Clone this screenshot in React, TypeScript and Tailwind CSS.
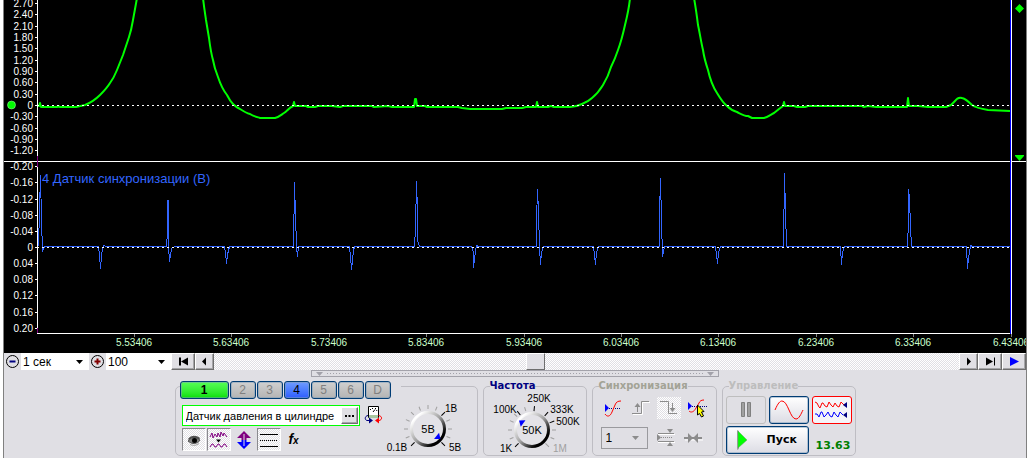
import { useState } from 'react';
import clsx from 'clsx';

const CHECKER = 'bg-[repeating-conic-gradient(#ffffff_0_25%,#e0dfe4_0_50%)] bg-[length:2px_2px]';
const RAISED = 'border border-t-white border-l-white border-r-[#6e6e6e] border-b-[#6e6e6e] bg-[#e0dfe4] shadow-[inset_-1px_-1px_0_#a5a5a8]';
const XP_BORDER = 'border border-[#003c74] rounded-[3px] shadow-[inset_0_0_0_1px_#7f9db988]';

const pressureScale = [2.7, 2.4, 2.1, 1.8, 1.5, 1.2, 0.9, 0.6, 0.3, 0, -0.3, -0.6, -0.9, -1.2];
const syncScale = [-0.2, -0.16, -0.12, -0.08, -0.04, 0, 0.04, 0.08, 0.12, 0.16, 0.2];
const timeScale = [5.53406, 5.63406, 5.73406, 5.83406, 5.93406, 6.03406, 6.13406, 6.23406, 6.33406, 6.43406];

const PRESSURE_PATH =
  'M38 106L39 106L40 103L41 107L57 107L58 106L60 107L76 107L85 105C90 103 96 99 100 95C104 91 107 88 110 83C113 79 115 75 117 70C119 65 121 60 123 55C125 49 127 43 129 37C131 31 132 26 133 20L137 -2' +
  'M203 -2C204 7 205 13 206 20L209 38C210 46 211 53 213 60C214 66 216 72 218 77C220 83 223 90 227 95C229 99 231 102 233 104C235 106 237 108 240 109C243 111 246 113 250 114C253 116 257 117 260 118L275 118C279 117 281 115 284 113C287 111 289 108 293 106' +
  'L294 102L295 106L306 106L308 107L315 107L318 106L332 106L340 107L343 106L372 106L374 107L388 106L392 107L414 107L415 99L416 99L417 106L425 106L427 107L458 107L462 108L470 109L502 109L506 108L522 108L526 107L536 107L537 102L538 107L548 107L551 106L554 107L570 107' +
  'C574 107 578 106 582 104C587 102 590 100 592 98C597 94 600 90 603 85C606 80 609 74 611 67C614 61 616 56 618 50C621 42 623 34 625 25C627 17 629 9 630 -2' +
  'M694 -2C696 9 697 17 698 25C700 34 701 42 703 50C704 57 706 64 708 70C710 79 713 87 717 93C720 98 723 103 727 106C730 109 733 111 737 112C741 114 744 116 748 116L752 118L764 118C768 117 770 115 774 113L779 109L783 106' +
  'L784 102L785 106L794 106L797 107L805 107L808 106L862 106L864 107L868 106L876 107L907 107L908 98L909 106L918 106L928 107L946 107L951 105L955 101C957 98 959 97 962 98C966 99 969 102 972 105C976 108 982 109 988 110L1010 111';

const SYNC_PATH =
  'M38 246L39 210L40 175L41 220L42 251L44 246L98 246L99 254L100 268L101 256L102 248L103 245L106 246L166 246L167 232L167 200L168 200L168 246L169 261L171 248L174 246' +
  'L224 246L225 252L226 263L227 254L229 246L293 246L294 182L295 215L296 246L297 256L298 246L349 246L350 256L351 269L353 250L354 246L414 246L415 228L416 181L417 212L417 240L419 246' +
  'L471 246L473 252L473 267L475 250L476 245L478 246L536 246L536 220L537 189L538 212L539 246L540 264L541 252L543 246L593 246L594 254L595 264L596 252L598 246' +
  'L659 246L659 214L660 178L661 220L662 256L664 246L715 246L716 254L717 263L718 252L720 246L783 246L784 173L785 210L786 246L840 246L841 264L842 252L844 246L851 246L896 246' +
  'L907 246L908 220L908 189L909 198L910 226L911 246L966 246L967 268L968 258L970 245L972 246L1010 246';

const SCALE_FONT = "font-['Liberation_Sans',sans-serif] text-[10px]";

function Oscillogram() {
  return (
    <svg viewBox="4 0 1022 353" className="block w-full h-auto bg-black" role="img" aria-label="Осциллограмма">
      <g className={SCALE_FONT} fill="#ffffff" textAnchor="end">
        {pressureScale.map(v => (
          <text key={v} x="33" y={Math.round(109 - v * 37.8)}>{v === 0 ? '0' : v.toFixed(2)}</text>
        ))}
        {syncScale.map(v => (
          <text key={v} x="33" y={Math.round(251 + v * 404)}>{v === 0 ? '0' : v.toFixed(2)}</text>
        ))}
      </g>
      <g className={SCALE_FONT} fill="#ccffcc" textAnchor="middle">
        {timeScale.map((v, i) => (
          <text key={v} x={Math.round(134 + i * 97.4)} y="346">{v}</text>
        ))}
      </g>

      <g stroke="#ffffff" fill="none" shapeRendering="crispEdges">
        <path d="M4 161.5H1026M37.5 0V333.5H1011M1011.5 0V334" />
        {pressureScale.map(v => <path key={v} d={`M35 ${Math.round(105 - v * 37.8) + 0.5}h2`} />)}
        {syncScale.map(v => <path key={v} d={`M35 ${Math.round(247 + v * 404) + 0.5}h2`} />)}
      </g>
      <g stroke="#808080" shapeRendering="crispEdges">
        {timeScale.map((v, i) => <path key={v} d={`M${Math.round(134 + i * 97.4) + 0.5} 334v3`} />)}
      </g>
      <path d="M37.5 156V167M37.5 328V333" stroke="#800080" shapeRendering="crispEdges" />

      <path d={PRESSURE_PATH} stroke="#00ff00" strokeWidth="2" fill="none" strokeLinejoin="round" />
      <path d={SYNC_PATH} transform="translate(0.5 0.5)" stroke="#3366ff" fill="none" shapeRendering="crispEdges" />
      <path d="M38 105.5H1010M38 247.5H1010" stroke="#ffffff" strokeDasharray="2 3" strokeDashoffset="1" shapeRendering="crispEdges" />
      <path d="M1010.5 0V334" stroke="#0000ff" shapeRendering="crispEdges" />

      <text x="42" y="183" fill="#3366ff" className="font-['Liberation_Sans',sans-serif] text-[13px]">4 Датчик синхронизации (В)</text>

      <circle cx="11.5" cy="105" r="4" fill="#00ff00" stroke="#b0ffb0" strokeWidth="0.5" />
      <path d="M1019.5 4L1024 8.500L1019.5 13L1015 8.500ZM1015 155H1024V156L1019.5 161L1015 156Z" fill="#00ff00" />
    </svg>
  );
}

function ZoomIcon({ sign }: { sign: 'minus' | 'plus' }) {
  return (
    <svg width="15" height="15" viewBox="0 0 15 15" fill="none" aria-hidden="true">
      <circle cx="7.500" cy="7.500" r="6" stroke="#000000" />
      {sign === 'minus'
        ? <path d="M4.500 7.500h6" stroke="#000080" strokeWidth="2" />
        : <path d="M4.500 7.500h6M7.500 4.500v6" stroke="#800000" strokeWidth="2" />}
    </svg>
  );
}

function DropSelect({ label, value, options, onChange, className }: {
  label: string;
  value: string;
  options: string[];
  onChange: (v: string) => void;
  className: string;
}) {
  return (
    <label className={clsx('relative flex items-center bg-white', className)}>
      <span className="sr-only">{label}</span>
      <select
        value={value}
        onChange={e => onChange(e.target.value)}
        className="w-full h-full pl-0.5 appearance-none text-[12px] leading-4 outline-none"
      >
        {options.map(o => <option key={o}>{o}</option>)}
      </select>
      <svg width="7" height="4" viewBox="0 0 7 4" className="absolute right-1.5 pointer-events-none">
        <path d="M0 0h7L3.500 4z" fill="#000000" />
      </svg>
    </label>
  );
}

function NavButton({ label, path, color = '#000000', className, onClick }: {
  label: string;
  path: string;
  color?: string;
  className: string;
  onClick: () => void;
}) {
  return (
    <button aria-label={label} onClick={onClick} className={clsx('flex items-center justify-center', RAISED, className)}>
      <svg width="13" height="9" viewBox="0 0 13 9"><path d={path} fill={color} /></svg>
    </button>
  );
}

function TimeBar() {
  const [span, setSpan] = useState('1 сек');
  const [gain, setGain] = useState('100');
  const [pos, setPos] = useState(43);

  return (
    <div className="flex h-[17px]">
      <button aria-label="Уменьшить развёртку" className="w-[17px] flex items-center justify-center"><ZoomIcon sign="minus" /></button>
      <DropSelect label="Развёртка" value={span} options={['1 сек', '2 сек', '5 сек']} onChange={setSpan} className="w-[68px]" />
      <button aria-label="Увеличить развёртку" className="w-[17px] flex items-center justify-center"><ZoomIcon sign="plus" /></button>
      <DropSelect label="Масштаб" value={gain} options={['50', '100', '200']} onChange={setGain} className="w-[65px]" />
      <NavButton label="В начало" path="M2 0.500h2v8h-2zM11 0.500v8L4 4.500z" className="w-6" onClick={() => setPos(0)} />
      <NavButton label="Назад" path="M8 0.500v8L4 4.500z" className="w-[19px]" onClick={() => setPos(p => Math.max(0, p - 1))} />
      <input
        type="range"
        aria-label="Положение"
        value={pos}
        onChange={e => setPos(Number(e.target.value))}
        className={clsx(
          'flex-1 min-w-0 appearance-none h-[17px]',
          CHECKER,
          '[&::-webkit-slider-thumb]:appearance-none [&::-webkit-slider-thumb]:w-[19px] [&::-webkit-slider-thumb]:h-[17px] [&::-webkit-slider-thumb]:bg-[#e0dfe4]',
          '[&::-webkit-slider-thumb]:border [&::-webkit-slider-thumb]:border-t-white [&::-webkit-slider-thumb]:border-l-white [&::-webkit-slider-thumb]:border-r-[#6e6e6e] [&::-webkit-slider-thumb]:border-b-[#6e6e6e]',
        )}
      />
      <NavButton label="Вперёд" path="M5 0.500v8L9 4.500z" className="w-[19px]" onClick={() => setPos(p => Math.min(100, p + 1))} />
      <NavButton label="В конец" path="M2 0.500v8L9 4.500zM10 0.500h1v8h-1z" className="w-6" onClick={() => setPos(100)} />
      <NavButton label="Воспроизвести" path="M2 0v9L11 4.500z" color="#0000ff" className="w-6" onClick={() => setPos(100)} />
    </div>
  );
}

function Splitter() {
  return (
    <div className="w-[408px] h-[7px] flex items-center justify-between px-1 border border-[#a3a2aa] bg-[#e0dfe4]">
      <svg width="7" height="4" viewBox="0 0 7 4"><path d="M0 0h7L3.500 4z" fill="#a3a2aa" /></svg>
      <div className="flex-1 mx-1 h-px bg-[repeating-linear-gradient(90deg,#a3a2aa_0_1px,transparent_1px_3px)]" />
      <svg width="7" height="4" viewBox="0 0 7 4"><path d="M0 0h7L3.500 4z" fill="#a3a2aa" /></svg>
    </div>
  );
}

interface KnobMark {
  angle: number;
  label: string;
  x: number;
  y: number;
  off?: boolean;
}

const rangeMarks: KnobMark[] = [
  { angle: -135, label: '0.1В', x: -31, y: 22 },
  { angle: 45, label: '1В', x: 23, y: -17 },
  { angle: 135, label: '5В', x: 27, y: 22 },
];

const freqMarks: KnobMark[] = [
  { angle: -135, label: '1K', x: -26, y: 22 },
  { angle: -38, label: '100K', x: -27, y: -17 },
  { angle: 6, label: '250K', x: 7, y: -28 },
  { angle: 42, label: '333K', x: 30, y: -17 },
  { angle: 68, label: '500K', x: 36, y: -5 },
  { angle: 135, label: '1M', x: 28, y: 22, off: true },
];

const RANGE_TICKS = [-112, -90, -67, -45, -22, 0, 22, 67, 90, 112];
const FREQ_TICKS = [-112, -90, -67, -48, -18, 90, 112];

function Knob({ id, title, value, pointer, marks, ticks, wide }: {
  id: string;
  title: string;
  value: string;
  pointer: number;
  marks: KnobMark[];
  ticks: number[];
  wide?: boolean;
}) {
  const [angle, setAngle] = useState(pointer);
  const half = wide ? 48 : 44;

  return (
    <label className="relative block">
      <span className="sr-only">{title}</span>
      <input
        type="range"
        min={-135}
        max={135}
        value={angle}
        onChange={e => setAngle(Number(e.target.value))}
        className="absolute inset-0 w-full h-full opacity-0"
      />
      <svg width={half * 2} height="63" viewBox={`${-half} -38 ${half * 2} 63`} className="pointer-events-none">
        <defs>
          <linearGradient id={id} x1="0" y1="0" x2="1" y2="1">
            <stop offset="0.15" stopColor="#ffffff" />
            <stop offset="0.5" stopColor="#a0a0a0" />
            <stop offset="0.8" stopColor="#000000" />
          </linearGradient>
        </defs>
        {ticks.map(a => <path key={a} d="M0 -20v-4" stroke="#a0a0a0" transform={`rotate(${a})`} />)}
        {marks.map(m => (
          <path key={m.label} d="M0 -19v-5" stroke={m.off ? '#a0a0a0' : '#000000'} transform={`rotate(${m.angle})`} />
        ))}
        <circle r="16.500" fill="#e3e2e7" stroke={`url(#${id})`} strokeWidth="3" />
        <path d="M0 -16L4 -11H-4Z" fill="#0000ff" transform={`rotate(${angle})`} />
        <g className={SCALE_FONT} textAnchor="middle">
          {marks.map(m => <text key={m.label} x={m.x} y={m.y} fill={m.off ? '#a0a0a0' : '#000000'}>{m.label}</text>)}
        </g>
        <text y="4" textAnchor="middle" className="font-['Liberation_Sans',sans-serif] text-[11px]">{value}</text>
      </svg>
    </label>
  );
}

function Group({ title, color, className, children }: {
  title: string;
  color: string;
  className: string;
  children: React.ReactNode;
}) {
  return (
    <fieldset className={clsx('border border-[#bebdc3] rounded-[5px] min-w-0', className)}>
      <legend className={clsx("ml-1.5 h-3 font-['DejaVu_Sans',sans-serif] font-bold text-[10px] leading-3", color)}>{title}</legend>
      {children}
    </fieldset>
  );
}

function ToolButton({ label, pressed, children }: { label: string; pressed?: boolean; children: React.ReactNode }) {
  return (
    <button
      aria-label={label}
      aria-pressed={pressed}
      className={clsx(
        'w-6 h-[23px] flex items-center justify-center',
        pressed && 'border border-t-[#8a8a8e] border-l-[#8a8a8e] border-r-white border-b-white',
        pressed && CHECKER,
      )}
    >
      {children}
    </button>
  );
}

function ChannelGroup() {
  const [active, setActive] = useState('4');
  const [name, setName] = useState('Датчик давления в цилиндре');

  return (
    <fieldset className="w-[303px] h-[70px] mt-1.5 flex flex-wrap content-start border border-[#bebdc3] rounded-[5px]">
      <div className="w-[221px] h-[18px] -mt-1.5 ml-1 pr-1.5 flex gap-px bg-[#e0dfe4]">
        {['1', '2', '3', '4', '5', '6', 'D'].map(ch => (
          <button
            key={ch}
            onClick={() => setActive(ch)}
            aria-pressed={ch === active}
            className={clsx(
              'flex items-center justify-center text-[12px] leading-3',
              XP_BORDER,
              ch === '1' && 'w-[49px] font-bold bg-linear-to-b from-[#55ff55] to-[#00e000]',
              ch !== '1' && 'w-[26px]',
              ch !== '1' && ch === active && 'bg-linear-to-b from-[#6f9bff] to-[#2f5cff]',
              ch !== '1' && ch !== active && 'bg-linear-to-b from-[#d0d0d0] to-[#b4b4b4] text-[#808080]',
            )}
          >
            {ch}
          </button>
        ))}
      </div>
      <div className="w-[202px] ml-1.5 pt-1.5">
        <div className="flex items-center gap-1">
          <div className="w-[178px] h-[21px] flex items-center border border-[#00ff00] bg-white pr-px">
            <input
              aria-label="Название канала"
              value={name}
              onChange={e => setName(e.target.value)}
              className="flex-1 min-w-0 pl-[3px] text-[11px] leading-4 outline-none"
            />
            <button aria-label="Выбрать датчик" className={clsx('w-[17px] h-[17px] flex items-center justify-center', RAISED)}>
              <svg width="9" height="2" viewBox="0 0 9 2"><path d="M0 1h2M3.500 1h2M7 1h2" stroke="#000000" strokeWidth="2" /></svg>
            </button>
          </div>
          <button aria-label="Обновить датчик">
            <svg width="19" height="19" viewBox="0 0 19 19" fill="none">
              <path d="M4.500 0.500h10v11h-10z" fill="#ffffff" stroke="#000000" />
              <path d="M5 9h9v3H5z" fill="#a8c8a0" />
              <path d="M6 4l1-1M8 2.500h1M11 2.500h1M12.500 4l.5 1M9 6l2-2.500" stroke="#000000" />
              <path d="M4 9.500C0.500 10 0.500 14 3 14.500H6" stroke="#000080" />
              <path d="M5 11.500v6L9 14.500z" fill="#000080" />
              <path d="M14.500 9.500C18.500 10 18.500 14 15 14.500" stroke="#ff0000" />
              <path d="M15 11.500v6L11 14.500z" fill="#ff0000" />
            </svg>
          </button>
        </div>
        <div className="flex pt-0.5 gap-px">
          <ToolButton label="Показать канал" pressed>
            <svg width="14" height="12" viewBox="0 0 14 12" fill="none">
              <path d="M1 5C4 1 9 1 13 4L12 6C9 3 5 4 2 6z" fill="#505050" />
              <path d="M1 7C4 4 9 3.500 13 6C11 10 5 11 1 7z" fill="#808080" stroke="#404040" strokeWidth="0.800" />
              <circle cx="7.500" cy="6.500" r="2.500" fill="#000000" />
              <path d="M3 10.500C6 12 10 11.500 12 9.500" stroke="#a0a0a0" />
            </svg>
          </ToolButton>
          <ToolButton label="Фильтр" pressed>
            <svg width="19" height="18" viewBox="0 0 19 18" fill="none">
              <path d="M1 6L3 2L4 7L6 3L8 6L9 2L11 6L12 1L14 5L15 2L18 6" stroke="#800080" />
              <path d="M7 8.500h5L9.500 11.500z" fill="#000000" />
              <path d="M1 16L3 13H4L6 16H7L9 13H10L12 16H13L15 13H16L18 16" stroke="#800080" />
            </svg>
          </ToolButton>
          <ToolButton label="Инвертировать">
            <svg width="14" height="18" viewBox="0 0 14 18">
              <path d="M7 0L14 7H9.500V9H4.500V7H0z" fill="#800080" />
              <path d="M7 18L14 11H9.500V9H4.500V11H0z" fill="#0000ff" />
              <path d="M7 3v12" stroke="#e0dfe4" />
            </svg>
          </ToolButton>
          <ToolButton label="Сетка" pressed>
            <svg width="18" height="16" viewBox="0 0 18 16" shapeRendering="crispEdges">
              <path d="M0 2.500h18M0 14.500h18" stroke="#000000" />
              <path d="M0 8.500h18" stroke="#000000" strokeDasharray="1 1" />
            </svg>
          </ToolButton>
          <ToolButton label="Функция">
            <span className="font-['Liberation_Sans',sans-serif] italic font-bold text-[14px] leading-4">
              f<span className="text-[10px]">x</span>
            </span>
          </ToolButton>
        </div>
      </div>
      <div className="-mt-2">
        <Knob id="rangeRim" title="Диапазон" value="5В" pointer={129} marks={rangeMarks} ticks={RANGE_TICKS} />
      </div>
    </fieldset>
  );
}

function SyncGroup() {
  return (
    <Group title="Синхронизация" color="text-[#a3a396]" className="w-[125px]">
      <div className="flex items-center gap-1 pl-2 pt-1">
        <button aria-label="Уровень" className="w-6 h-6 flex items-center justify-center">
          <svg width="18" height="17" viewBox="0 0 18 17" fill="none">
            <path d="M1 4v8L5 8z" fill="#0000ff" />
            <path d="M5 8.500H17" stroke="#000080" strokeDasharray="1 1" />
            <path d="M1 14C3 17 6 17 8 12L11 5C12 2 14 1 17 1" stroke="#ff0000" />
          </svg>
        </button>
        <button aria-label="По фронту" disabled className="w-6 h-6 flex items-center justify-center">
          <svg width="18" height="16" viewBox="0 0 18 16" fill="none">
            <path d="M1 14.500H10.500V2.500H18" stroke="#ffffff" />
            <path d="M0 13.500H9.500V1.500H17M5.500 12V5" stroke="#8c8c8c" />
            <path d="M2.500 7L5.500 3L8.500 7z" fill="#8c8c8c" />
          </svg>
        </button>
        <button aria-label="По спаду" aria-pressed disabled className={clsx('w-6 h-[22px] flex items-center justify-center', CHECKER)}>
          <svg width="18" height="16" viewBox="0 0 18 16" fill="none">
            <path d="M0 1.500H8.500V13.500H17M12.500 3V10" stroke="#8c8c8c" />
            <path d="M9.500 8H15.500L12.500 12z" fill="#8c8c8c" />
          </svg>
        </button>
        <button aria-label="Выбор уровня" className="w-6 h-6 flex items-center justify-center">
          <svg width="20" height="19" viewBox="0 0 20 19" fill="none">
            <path d="M1 3v8L5 7z" fill="#0000ff" />
            <path d="M5 7.500H20" stroke="#000080" strokeDasharray="1 1" />
            <path d="M2 12C4 14 7 13 9 9L12 4C13 2 14 1 17 1" stroke="#ff0000" />
            <path d="M10.500 6L17 12.500L14.500 13L16.500 17L14.500 18L12.500 14.500L10.500 16z" fill="#ffff00" stroke="#000000" />
          </svg>
        </button>
      </div>
      <div className="flex items-center gap-1 pl-2 pt-1.5">
        <label className="relative flex items-center w-[47px] h-[22px] mr-1 border border-[#9a9a9e]">
          <span className="sr-only">Канал синхронизации</span>
          <select className="w-full h-full pl-1 appearance-none text-[12px] outline-none">
            <option>1</option>
            <option>2</option>
          </select>
          <svg width="7" height="4" viewBox="0 0 7 4" className="absolute right-2 pointer-events-none">
            <path d="M0 0h7L3.500 4z" fill="#8c8c8c" />
          </svg>
        </label>
        <button aria-label="Гистерезис" disabled className="w-5 h-6 flex items-center justify-center">
          <svg width="18" height="18" viewBox="0 0 18 18" fill="none">
            <path d="M0 5v7L4 8.500z" fill="#8c8c8c" />
            <path d="M4 8.500H16" stroke="#8c8c8c" strokeDasharray="1 1" />
            <path d="M1 5.500H18M1 13.500H18" stroke="#ffffff" />
            <path d="M1 4.500H17M1 12.500H17" stroke="#8c8c8c" />
            <path d="M10 0h6L13 4zM10 17h6L13 13z" fill="#8c8c8c" />
          </svg>
        </button>
        <button aria-label="Сжать" disabled className="w-7 h-6 flex items-center justify-center">
          <svg width="19" height="10" viewBox="0 0 19 10" fill="none">
            <path d="M1 7h18" stroke="#ffffff" />
            <path d="M0 5h18" stroke="#8c8c8c" strokeWidth="2" />
            <path d="M4 0v10L9 5zM14 0v10L9 5z" fill="#8c8c8c" />
          </svg>
        </button>
      </div>
    </Group>
  );
}

function ControlGroup() {
  const [running, setRunning] = useState(false);

  return (
    <Group title="Управление" color="text-[#bdbdbd]" className="w-[134px]">
      <div className="pl-[3px] pt-1 flex gap-[3px]">
        <button aria-label="Пауза" disabled className="w-10 h-7 flex items-center justify-center border border-[#bebebe] rounded-[3px]">
          <svg width="12" height="16" viewBox="0 0 12 16" fill="#a0a0a0" stroke="#808080">
            <path d="M1.500 0.500h3v14h-3zM7.500 0.500h3v14h-3z" />
          </svg>
        </button>
        <button aria-label="Один кадр" className={clsx('w-10 h-7 flex items-center justify-center bg-linear-to-b from-white to-[#dcdce4]', XP_BORDER)}>
          <svg width="30" height="20" viewBox="0 0 30 20" fill="none">
            <path d="M1 10C4 3 6 1 8 1C14 1 16 19 22 19C25 19 27 14 29 10" stroke="#ff0000" />
          </svg>
        </button>
        <button aria-label="Непрерывно" aria-pressed className="w-10 h-7 flex items-center justify-center bg-[#f4f4f8] border border-[#ff0000] rounded-[3px]">
          <svg width="33" height="20" viewBox="0 0 33 20" fill="none">
            <path d="M0 2L2 3L4 7L5 8L7 3H8L10 6L12 7L14 2L16 5L18 7L20 3L22 6L24 7L26 2L29 5" stroke="#ff0000" />
            <path d="M32 2v6L28 5z" fill="#000080" />
            <path d="M0 14H2L4 17L6 12H7L9 17L11 15L13 12L15 16L17 17L19 12L21 15L23 17L25 12L28 15" stroke="#0000ff" />
            <path d="M32 12v6L28 15z" fill="#000080" />
          </svg>
        </button>
      </div>
      <div className="pl-[3px] pt-0.5 flex gap-[3px]">
        <button
          onClick={() => setRunning(r => !r)}
          className={clsx("w-[83px] h-7 flex items-center gap-[19px] pl-2.5 bg-linear-to-b from-white to-[#dcdce4] font-['DejaVu_Sans',sans-serif] font-bold text-[11px]", XP_BORDER)}
        >
          <svg width="11" height="20" viewBox="0 0 11 20">
            <path d="M0 0v20l2-1V1z" fill="#a0a0a0" />
            <path d="M1 1L10 10L1 18z" fill="#00ff00" stroke="#60a060" strokeWidth="0.500" />
          </svg>
          {running ? 'Стоп' : 'Пуск'}
        </button>
        <output className="pl-1 pt-3.5 font-['DejaVu_Sans',sans-serif] font-bold text-[11px] leading-3 text-[#008000]">13.63</output>
      </div>
    </Group>
  );
}

export default function App() {
  return (
    <div className="min-h-screen flex bg-white font-['Liberation_Sans',sans-serif] text-black">
      <main className="flex-1 min-w-0 ml-[3px] border-x border-[#808080] bg-[#e0dfe4]">
        <Oscillogram />
        <TimeBar />
        <div className="flex flex-col items-center">
          <Splitter />
          <div className="flex pt-[3px] gap-[5px]">
            <ChannelGroup />
            <Group title="Частота" color="text-[#000080]" className="w-[104px]">
              <Knob id="freqRim" title="Частота" value="50K" pointer={-54} marks={freqMarks} ticks={FREQ_TICKS} wide />
            </Group>
            <SyncGroup />
            <ControlGroup />
          </div>
        </div>
      </main>
    </div>
  );
}
